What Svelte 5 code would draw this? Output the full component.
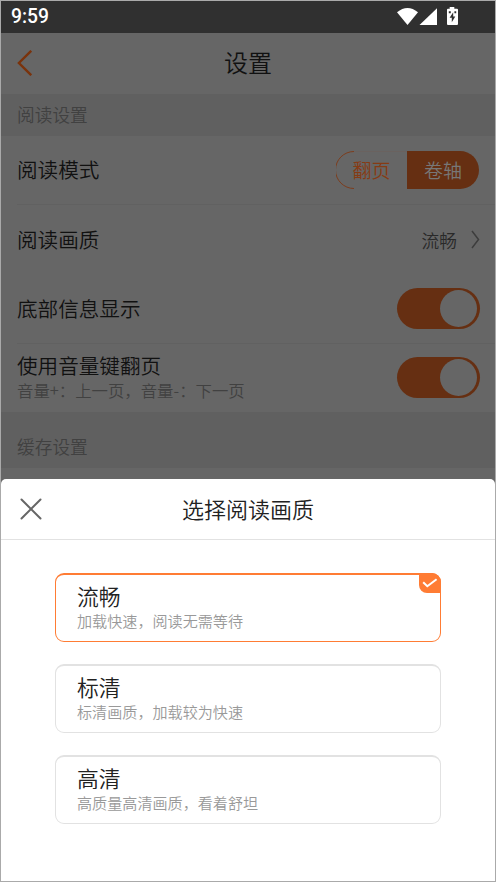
<script lang="ts">
  type Quality = { id: string; name: string; desc: string }

  const qualities: Quality[] = [
    { id: 'smooth', name: '流畅', desc: '加载快速，阅读无需等待' },
    { id: 'standard', name: '标清', desc: '标清画质，加载较为快速' },
    { id: 'high', name: '高清', desc: '高质量高清画质，看着舒坦' },
  ]

  let selected = $state('smooth')
  let showInfo = $state(true)
  let volumeKeys = $state(true)

  const current = $derived(qualities.find((quality) => quality.id === selected)?.name)
</script>

<div class="screen">
  <div class="status">
    <span class="time">9:59</span>
    <svg class="signals" width="63" height="20" viewBox="0 0 63 20" aria-hidden="true">
      <path d="M0 5.3 Q10.5 -3.3 21 5.3 L10.5 18Z" fill="#fff" />
      <path d="M40 1.2 V18 H22.5Z" fill="#fff" />
      <path d="M52.7 0h4.6v1.8H60q1 0 1 1V17q0 1-1 1h-9q-1 0-1-1V2.8q0-1 1-1h1.7z" fill="#fff" />
      <path d="M56.2 5.3 L52.6 10.7 H54.8 V15.2 L58.3 9.4 H56.2Z M51.8 4.2h2v2h-2z M57.4 4.2h1.8v2h-1.8z" fill="#303030" />
    </svg>
  </div>

  <header class="navbar">
    <button class="back" aria-label="返回">
      <svg width="16" height="26" viewBox="0 0 16 26">
        <path d="M15.2 .8 L2.9 13 L15.2 25.2" fill="none" stroke="#7a330c" stroke-width="2.4" />
      </svg>
    </button>
    <h1>设置</h1>
  </header>

  <div class="section">阅读设置</div>
  <div class="row mode">
    <span class="name">阅读模式</span>
    <div class="segment">
      <svg class="outline" width="71" height="38" viewBox="0 0 71 38" aria-hidden="true">
        <path d="M18 .5H71" stroke="#6a625f" fill="none" />
        <path d="M18 .5A18.5 18.5 0 0 0 18 37.5" stroke="#7d3d1d" fill="none" />
      </svg>
      <span class="page">翻页</span>
      <span class="scroll">卷轴</span>
    </div>
  </div>
  <div class="row">
    <span class="name">阅读画质</span>
    <span class="value">
      {current}
      <svg width="9" height="19" viewBox="0 0 9 19" aria-hidden="true">
        <path d="M1 1 L7.5 9.5 L1 18" fill="none" stroke="#3d3d3d" stroke-width="1.5" />
      </svg>
    </span>
  </div>
  <div class="row">
    <span class="name">底部信息显示</span>
    <button class="toggle" class:on={showInfo} aria-label="底部信息显示" onclick={() => (showInfo = !showInfo)}>
      <span class="knob"></span>
    </button>
  </div>
  <div class="row volume">
    <div class="stack">
      <span class="name">使用音量键翻页</span>
      <span class="hint">音量+：上一页，音量-：下一页</span>
    </div>
    <button class="toggle" class:on={volumeKeys} aria-label="使用音量键翻页" onclick={() => (volumeKeys = !volumeKeys)}>
      <span class="knob"></span>
    </button>
  </div>
  <div class="section cache">缓存设置</div>
  <div class="rest"></div>

  <section class="sheet">
    <div class="sheet-head">
      <button class="close" aria-label="关闭">
        <svg width="22" height="22" viewBox="0 0 22 22">
          <path d="M1.5 1.5 L20.5 20.5 M20.5 1.5 L1.5 20.5" fill="none" stroke="#666" stroke-width="2" stroke-linecap="round" />
        </svg>
      </button>
      <h2>选择阅读画质</h2>
    </div>
    <div class="options">
      {#each qualities as quality (quality.id)}
        <button class="option" class:active={quality.id === selected} onclick={() => (selected = quality.id)}>
          <span class="option-name">{quality.name}</span>
          <span class="option-desc">{quality.desc}</span>
          {#if quality.id === selected}
            <span class="badge">
              <svg width="16" height="10" viewBox="0 0 16 10">
                <path d="M1.2 4.3 L5.3 8.3 L14.6 1.2" fill="none" stroke="#fff" stroke-width="2" />
              </svg>
            </span>
          {/if}
        </button>
      {/each}
    </div>
  </section>
</div>

<style>
  :global(body) {
    background: #666;
  }

  .screen {
    box-sizing: border-box;
    width: 496px;
    height: 882px;
    border: 1px solid #aaa;
    display: flex;
    flex-direction: column;
    overflow: hidden;
    background: #666;
    font-family: 'Noto Sans CJK SC', sans-serif;
    font-weight: 350;
    color: #111;
  }

  button {
    padding: 0;
    border: 0;
    background: none;
    font-family: inherit;
    font-weight: inherit;
    color: inherit;
    text-align: left;
  }

  svg {
    display: block;
  }

  .status {
    flex: none;
    height: 32px;
    display: flex;
    align-items: center;
    justify-content: space-between;
    padding: 0 35px 0 10px;
    background: #303030;
  }

  .time {
    font: 500 19.3px/32px Roboto, sans-serif;
    color: #fff;
  }

  .navbar,
  .sheet-head {
    flex: none;
    box-sizing: border-box;
    height: 61px;
    display: grid;
    grid-template-columns: 60px 1fr 60px;
    align-items: center;
  }

  .back {
    padding: 0 0 1px 15px;
  }

  h1,
  h2 {
    margin: 0;
    padding-bottom: 3px;
    text-align: center;
    font-weight: inherit;
    font-size: 24px;
    line-height: 36px;
  }

  .section {
    flex: none;
    box-sizing: border-box;
    height: 42px;
    padding-left: 16px;
    background: #606060;
    color: #414141;
    font-size: 17.7px;
    line-height: 41px;
  }

  .section.cache {
    height: 56px;
    padding-top: 14px;
  }

  .row {
    flex: none;
    box-sizing: border-box;
    height: 69px;
    margin-left: 16px;
    padding-right: 15px;
    display: flex;
    align-items: center;
    justify-content: space-between;
  }

  .row.mode {
    padding-right: 16px;
    border-bottom: 1px solid #616161;
  }

  .row.volume {
    padding-bottom: 1px;
    border-top: 1px solid #616161;
  }

  .name {
    padding-bottom: 2px;
    font-size: 20.6px;
    line-height: 28px;
  }

  .stack {
    display: flex;
    flex-direction: column;
    padding-bottom: 3px;
  }

  .stack .name {
    padding: 0;
  }

  .hint {
    font-size: 16.4px;
    line-height: 23px;
    color: #414141;
  }

  .segment {
    position: relative;
    display: flex;
    font-size: 19px;
    line-height: 38px;
    text-align: center;
  }

  .outline {
    position: absolute;
    left: 0;
    top: 0;
  }

  .page {
    width: 71px;
    color: #863b14;
  }

  .scroll {
    width: 72px;
    border-radius: 0 19px 19px 0;
    background: #662f12;
    color: #777;
  }

  .value {
    display: flex;
    align-items: center;
    gap: 14px;
    font-size: 17.7px;
    color: #292929;
  }

  .toggle {
    box-sizing: border-box;
    width: 83px;
    height: 41px;
    padding: 2px 3px;
    display: flex;
    border-radius: 21px;
    background: #505050;
  }

  .toggle.on {
    justify-content: flex-end;
    background: #662f12;
  }

  .knob {
    width: 37px;
    height: 37px;
    border-radius: 50%;
    background: #666;
  }

  .rest {
    flex: none;
    height: 11px;
  }

  .sheet {
    flex: 1;
    border-radius: 5px 5px 0 0;
    background: #fff;
    color: #222;
  }

  .sheet-head {
    border-bottom: 1px solid #e2e2e2;
  }

  .close {
    padding-left: 19px;
  }

  h2 {
    font-size: 22px;
  }

  .options {
    display: flex;
    flex-direction: column;
    gap: 22px;
    padding: 33px 54px 0;
  }

  .option {
    position: relative;
    box-sizing: border-box;
    height: 69px;
    padding: 6px 0 0 21px;
    display: flex;
    flex-direction: column;
    border: 1px solid #e2e2e2;
    border-top-width: 2px;
    border-radius: 9px;
  }

  .option.active {
    border-color: #ff7c34;
  }

  .option-name {
    font-size: 21.8px;
    line-height: 29px;
  }

  .option-desc {
    font-size: 15.1px;
    line-height: 21px;
    color: #999;
  }

  .badge {
    position: absolute;
    right: -1px;
    top: -2px;
    width: 22px;
    height: 20px;
    display: flex;
    align-items: center;
    justify-content: center;
    border-radius: 0 9px 0 8px;
    background: #ff7c34;
  }
</style>
